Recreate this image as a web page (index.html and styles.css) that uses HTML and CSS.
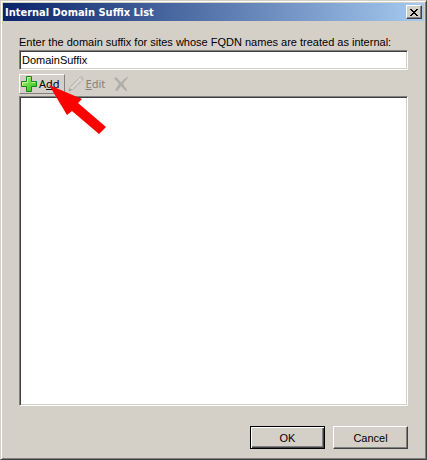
FILE: index.html
```html
<!DOCTYPE html>
<html lang="en">
<head>
<meta charset="utf-8">
<title>Internal Domain Suffix List</title>
<link rel="stylesheet" href="styles.css">
</head>
<body>
<main class="window">
  <header class="titlebar">
    <h1 class="title">Internal Domain Suffix List</h1>
    <button class="close" type="button" aria-label="Close">
      <svg width="8" height="7" viewBox="0 0 8 7" shape-rendering="crispEdges"><path d="M0 0h2v1h1v1h2V1h1V0h2v1H7v1H6v1H5v1h1v1h1v1h1v1H6V6H5V5H3v1H2v1H0V6h1V5h1V4h1V3H2V2H1V1H0z" fill="#000"/></svg>
    </button>
  </header>
  <form class="content">
    <label class="label" for="suffix">Enter the domain suffix for sites whose FQDN names are treated as internal:</label>
    <input class="field" id="suffix" type="text" value="DomainSuffix">
    <div class="toolbar">
      <button class="tool tool-raised" type="button">
        <svg width="16" height="16" viewBox="0 0 16 16">
          <defs><linearGradient id="plus" x1="0" y1="0" x2="1" y2="1"><stop offset="0" stop-color="#b9f58e"/><stop offset=".5" stop-color="#68db43"/><stop offset="1" stop-color="#35b51d"/></linearGradient></defs>
          <path d="M5.500.5h5v5h5v5h-5v5h-5v-5h-5v-5h5z" fill="url(#plus)" stroke="#188718" stroke-linejoin="round"/>
          <path d="M6.500 6.500v-5h3M1.500 9V6.500h5M10.500 6.500h4" fill="none" stroke="#d1fbb4" stroke-opacity=".8"/>
        </svg>
        <span>A<u>d</u>d</span>
      </button>
      <button class="tool" type="button" disabled>
        <svg width="16" height="16" viewBox="0 0 16 16">
          <path d="M1 15l1.500-4.500L11.500 1.500q2-1.500 3 0t-.5 3L5.500 13z" fill="#d0cec8" stroke="#b2b0aa"/>
          <path d="M4 11.500l7-7M10.500 2.500l3 3M2.500 11l2.500 2" fill="none" stroke="#e4e2dc"/>
          <path d="M1 15l1-2 1 1z" fill="#85837e"/>
        </svg>
        <span><u>E</u>dit</span>
      </button>
      <button class="tool" type="button" disabled aria-label="Delete">
        <svg width="16" height="16" viewBox="0 0 16 16">
          <path d="M1 2.500Q3 .5 5 3l3 3.500Q11 2.500 14.500 1q1 .2 0 1.500-3 2.500-4.500 5.500 2 3.500 4 5.500.5 1.500-1 1.500-2.500-1.500-5-5-2 3-4 5-1.500.5-1.500-1.500Q4 10.500 6 8 3.500 4.500 1 2.500z" fill="#b0aea8"/>
        </svg>
      </button>
      <svg class="pointer" width="58" height="50" viewBox="0 0 58 50" aria-hidden="true"><path d="M0 0l33 14-4 4 28 24-7 7-27-23-5 4z" fill="#f00"/></svg>
    </div>
    <div class="list" role="listbox" aria-label="Domain suffixes"></div>
    <footer class="actions">
      <button class="button button-default" type="submit">OK</button>
      <button class="button" type="button">Cancel</button>
    </footer>
  </form>
</main>
</body>
</html>
```
FILE: styles.css
```css
* {
  box-sizing: border-box;
}

body {
  margin: 0;
  background: #d4d0c8;
  color: #000;
  font: 11px/16px "Liberation Sans", Arial, sans-serif;
}

button,
input {
  font: inherit;
  color: inherit;
  border-radius: 0;
}

.window {
  display: flex;
  flex-direction: column;
  min-height: 100vh;
  padding: 1px;
  border: 1px solid;
  border-color: #d4d0c8 #404040 #404040 #d4d0c8;
  box-shadow: inset 1px 1px #fff, inset -1px -1px #808080;
}

.titlebar {
  display: flex;
  align-items: center;
  justify-content: space-between;
  height: 18px;
  margin: 1px 1px 0;
  padding: 0 2px;
  background: linear-gradient(to right, #0a246a, #a6caf0);
}

.title {
  margin: 0;
  padding-top: 1px;
  color: #fff;
  font: bold 11px/16px "DejaVu Sans Condensed", Tahoma, sans-serif;
}

.close {
  display: flex;
  align-items: center;
  justify-content: center;
  width: 16px;
  height: 14px;
  padding: 0;
  background: #d4d0c8;
  border: 1px solid;
  border-color: #fff #404040 #404040 #fff;
  box-shadow: inset -1px -1px #808080;
}

.content {
  display: flex;
  flex: 1;
  flex-direction: column;
  padding: 13px 17px 9px;
}

.field,
.list {
  background: #fff;
  border: 1px solid;
  border-color: #808080 #fff #fff #808080;
  box-shadow: inset 1px 1px #404040, inset -1px -1px #d4d0c8;
}

.field {
  width: 100%;
  height: 20px;
  padding: 0 2px;
  outline: none;
}

.toolbar {
  position: relative;
  display: flex;
  gap: 1px;
  margin: 4px 0 2px;
}

.tool {
  display: flex;
  align-items: center;
  gap: 2px;
  height: 20px;
  padding: 0 4px 0 1px;
  background: none;
  border: 1px solid transparent;
  font: 11px/16px "Noto Sans", Tahoma, sans-serif;
}

.tool-raised {
  border-color: #fff #808080 #808080 #fff;
}

.tool:disabled {
  color: #808080;
}

.pointer {
  position: absolute;
  top: 11px;
  left: 30px;
}

.list {
  flex: 1;
}

.actions {
  display: flex;
  justify-content: flex-end;
  gap: 8px;
  margin-top: 20px;
}

.button {
  width: 75px;
  height: 23px;
  padding: 0;
  background: #d4d0c8;
  border: 1px solid;
  border-color: #fff #404040 #404040 #fff;
  box-shadow: inset -1px -1px #808080;
}

.button-default {
  border-color: #000;
  box-shadow: inset 1px 1px #fff, inset -1px -1px #404040, inset -2px -2px #808080;
}
```
